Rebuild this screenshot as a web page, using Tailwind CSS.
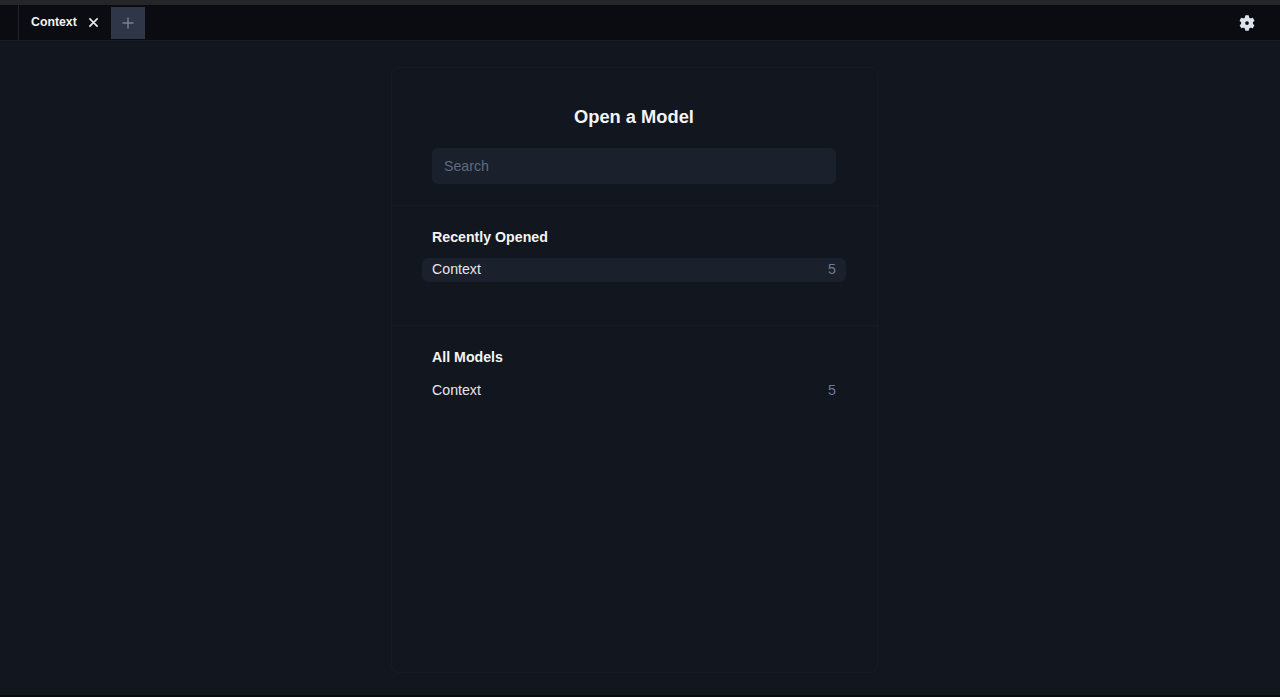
<!DOCTYPE html>
<html lang="en">
<head>
    <meta charset="UTF-8">
    <title>Open a Model</title>
    <script src="https://cdn.jsdelivr.net/npm/@tailwindcss/browser@4"></script>
</head>
<body class="bg-[#12161f] h-[697px] overflow-hidden flex flex-col font-['Liberation_Sans',sans-serif] text-white">
    <div class="h-[5px] bg-[#26262a] shrink-0"></div>
    <header class="h-[36px] shrink-0 bg-[#0a0c12] border-b border-[#181d27] flex items-center pr-[24px]">
        <div class="w-[19px] h-full border-r border-[#1f2530]"></div>
        <div class="w-[92px] h-full flex items-center pl-[12px] gap-[11px]">
            <span class="text-[12.3px] font-bold text-[#f1f3f6]">Context</span>
            <svg class="w-[11px] h-[11px] text-[#e5e7eb]" viewBox="0 0 12 12" fill="none" stroke="currentColor" stroke-width="1.8"><path d="M1.5 1.500l9 9M10.500 1.500l-9 9"/></svg>
        </div>
        <div class="w-[34px] h-[32px] mt-[1px] bg-[#2e3648] flex items-center justify-center">
            <svg class="w-[12px] h-[12px] text-[#748095]" viewBox="0 0 12 12" fill="none" stroke="currentColor" stroke-width="1.4"><path d="M6 .5v11M.5 6h11"/></svg>
        </div>
        <svg class="ml-auto mr-[1px] w-[16px] h-[16px] text-[#dbe3ee]" viewBox="0 0 512 512" fill="currentColor"><path d="M487 316l-42-25a193 193 0 0 0 0-70l42-25c5-3 7-9 5-14-11-35-30-67-54-93-4-4-10-5-15-2l-42 25a189 189 0 0 0-61-35V28c0-6-4-10-9-11-36-8-73-8-108 0-5 1-9 5-9 11v49a195 195 0 0 0-61 35L91 87c-5-3-11-2-15 2-24 26-43 58-54 93-2 5 0 11 5 14l42 25a193 193 0 0 0 0 70l-42 25c-5 3-7 9-5 14 11 35 30 67 54 93 4 4 10 5 15 2l42-25c18 15 38 27 61 35v49c0 6 4 10 9 11 36 8 73 8 108 0 5-1 9-5 9-11v-49a195 195 0 0 0 61-35l42 25c5 3 11 2 15-2 24-26 43-58 54-93 2-5 0-11-5-14zM256 316a60 60 0 1 1 0-120 60 60 0 0 1 0 120z"/></svg>
    </header>
    <main class="flex-1 flex justify-center pt-[26px] pb-[22px] pr-[11px]">
        <div class="w-[487px] border border-[#161b24] rounded-lg flex flex-col">
            <section class="h-[138px] shrink-0 border-b border-[#161b24] pl-[40px] pr-[41px] pt-[37px]">
                <h1 class="text-[18.3px] leading-[24px] font-bold text-center text-[#f3f4f6]">Open a Model</h1>
                <input placeholder="Search" class="mt-[19px] w-full h-[36px] rounded-md bg-[#1a202c] px-[12px] text-[14.2px] outline-none placeholder:text-[#5f6b80]">
            </section>
            <section class="h-[120px] shrink-0 border-b border-[#161b24] pl-[40px] pr-[41px] pt-[21px]">
                <h2 class="text-[14.2px] leading-[20px] font-bold text-[#f3f4f6]">Recently Opened</h2>
                <div class="mt-[11px] -mx-[10px] h-[24px] pb-[1px] px-[10px] rounded-md bg-[#1a202c] flex items-center justify-between text-[14.2px]">
                    <span class="text-[#e5e7eb]">Context</span>
                    <span class="text-[#6b7a94]">5</span>
                </div>
            </section>
            <section class="flex-1 pl-[40px] pr-[41px] pt-[21px]">
                <h2 class="text-[14.2px] leading-[20px] font-bold text-[#f3f4f6]">All Models</h2>
                <div class="mt-[12px] h-[24px] flex items-center justify-between text-[14.2px]">
                    <span class="text-[#e5e7eb]">Context</span>
                    <span class="text-[#6b7a94]">5</span>
                </div>
            </section>
        </div>
    </main>
    <div class="h-[2px] bg-[#0a0b0f] shrink-0"></div>
</body>
</html>
